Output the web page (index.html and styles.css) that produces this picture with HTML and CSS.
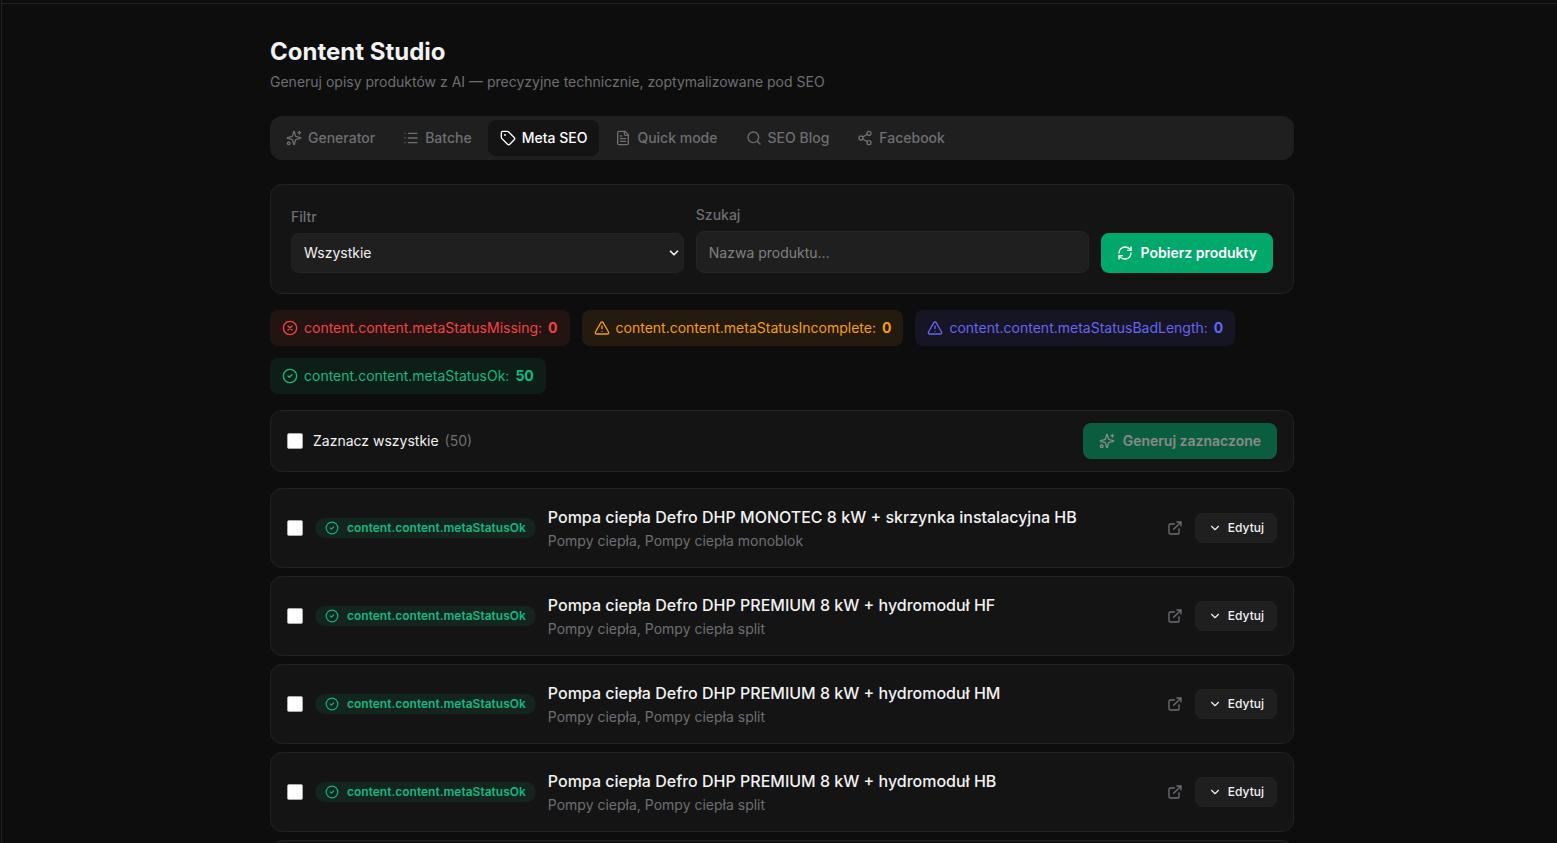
FILE: index.html
```html
<!DOCTYPE html>
<html lang="pl">
<head>
  <meta charset="UTF-8" />
  <meta name="viewport" content="width=device-width, initial-scale=1.0"/>
  <title>Content Studio</title>
  <link rel="stylesheet" href="styles.css">
</head>
<body>

<!-- icon sprite -->
<svg class="sprite" aria-hidden="true">
  <symbol id="i-sparkles" viewBox="0 0 24 24"><path d="M9.937 15.5A2 2 0 0 0 8.5 14.063l-6.135-1.582a.5.5 0 0 1 0-.962L8.5 9.936A2 2 0 0 0 9.937 8.5l1.582-6.135a.5.5 0 0 1 .963 0L14.063 8.5A2 2 0 0 0 15.5 9.937l6.135 1.581a.5.5 0 0 1 0 .964L15.5 14.063a2 2 0 0 0-1.437 1.437l-1.582 6.135a.5.5 0 0 1-.963 0z"/><path d="M20 2v4M22 4h-4"/><circle cx="4" cy="20" r="2"/></symbol>
  <symbol id="i-list" viewBox="0 0 24 24"><path d="M3 5h.01M3 12h.01M3 19h.01M8 5h13M8 12h13M8 19h13"/></symbol>
  <symbol id="i-tag" viewBox="0 0 24 24"><path d="M12.586 2.586A2 2 0 0 0 11.172 2H4a2 2 0 0 0-2 2v7.172a2 2 0 0 0 .586 1.414l8.704 8.704a2.426 2.426 0 0 0 3.42 0l6.58-6.58a2.426 2.426 0 0 0 0-3.42z"/><circle cx="7.5" cy="7.5" r=".5" fill="currentColor"/></symbol>
  <symbol id="i-file" viewBox="0 0 24 24"><path d="M15 2H6a2 2 0 0 0-2 2v16a2 2 0 0 0 2 2h12a2 2 0 0 0 2-2V7Z"/><path d="M14 2v4a2 2 0 0 0 2 2h4M10 9H8M16 13H8M16 17H8"/></symbol>
  <symbol id="i-search" viewBox="0 0 24 24"><circle cx="11" cy="11" r="8"/><path d="m21 21-4.3-4.3"/></symbol>
  <symbol id="i-share" viewBox="0 0 24 24"><circle cx="18" cy="5" r="3"/><circle cx="6" cy="12" r="3"/><circle cx="18" cy="19" r="3"/><path d="m8.59 13.51 6.83 3.98M15.41 6.51l-6.82 3.98"/></symbol>
  <symbol id="i-refresh" viewBox="0 0 24 24"><path d="M3 12a9 9 0 0 1 9-9 9.75 9.75 0 0 1 6.74 2.74L21 8"/><path d="M21 3v5h-5"/><path d="M21 12a9 9 0 0 1-9 9 9.75 9.75 0 0 1-6.74-2.74L3 16"/><path d="M8 16H3v5"/></symbol>
  <symbol id="i-x" viewBox="0 0 24 24"><circle cx="12" cy="12" r="10"/><path d="m15 9-6 6M9 9l6 6"/></symbol>
  <symbol id="i-alert" viewBox="0 0 24 24"><path d="m21.73 18-8-14a2 2 0 0 0-3.48 0l-8 14A2 2 0 0 0 4 21h16a2 2 0 0 0 1.73-3"/><path d="M12 9v4M12 17h.01"/></symbol>
  <symbol id="i-check" viewBox="0 0 24 24"><circle cx="12" cy="12" r="10"/><path d="m9 12 2 2 4-4"/></symbol>
  <symbol id="i-external" viewBox="0 0 24 24"><path d="M15 3h6v6M10 14 21 3M18 13v6a2 2 0 0 1-2 2H5a2 2 0 0 1-2-2V8a2 2 0 0 1 2-2h6"/></symbol>
  <symbol id="i-down" viewBox="0 0 24 24"><path d="m6 9 6 6 6-6"/></symbol>
</svg>

<div class="app">
  <aside class="sidebar"></aside>
  <div class="content">
    <header class="topbar"></header>
    <main class="page">
      <h1>Content Studio</h1>
      <p class="subtitle">Generuj opisy produktów z AI — precyzyjne technicznie, zoptymalizowane pod SEO</p>

      <nav class="tabs">
        <button class="tab"><svg class="icon"><use href="#i-sparkles"/></svg>Generator</button>
        <button class="tab"><svg class="icon"><use href="#i-list"/></svg>Batche</button>
        <button class="tab active"><svg class="icon"><use href="#i-tag"/></svg>Meta SEO</button>
        <button class="tab"><svg class="icon"><use href="#i-file"/></svg>Quick mode</button>
        <button class="tab"><svg class="icon"><use href="#i-search"/></svg>SEO Blog</button>
        <button class="tab"><svg class="icon"><use href="#i-share"/></svg>Facebook</button>
      </nav>

      <form class="card filters">
        <div class="field">
          <label for="filter">Filtr</label>
          <div class="select">
            <select id="filter">
              <option>Wszystkie</option>
            </select>
            <svg class="icon arrow"><use href="#i-down"/></svg>
          </div>
        </div>
        <div class="field">
          <label for="search">Szukaj</label>
          <input type="text" id="search" placeholder="Nazwa produktu...">
        </div>
        <button type="button" class="btn fetch"><svg class="icon"><use href="#i-refresh"/></svg>Pobierz produkty</button>
      </form>

      <div class="stats">
        <div class="stat red"><svg class="icon"><use href="#i-x"/></svg>content.content.metaStatusMissing: <b>0</b></div>
        <div class="stat amber"><svg class="icon"><use href="#i-alert"/></svg>content.content.metaStatusIncomplete: <b>0</b></div>
        <div class="stat indigo"><svg class="icon"><use href="#i-alert"/></svg>content.content.metaStatusBadLength: <b>0</b></div>
        <div class="stat green"><svg class="icon"><use href="#i-check"/></svg>content.content.metaStatusOk: <b>50</b></div>
      </div>

      <div class="card bulk">
        <input type="checkbox" id="all">
        <label for="all">Zaznacz wszystkie <span>(50)</span></label>
        <button class="btn generate" disabled><svg class="icon"><use href="#i-sparkles"/></svg>Generuj zaznaczone</button>
      </div>

      <div class="products">
        <article class="card product">
          <input type="checkbox" aria-labelledby="p1">
          <span class="badge"><svg class="icon"><use href="#i-check"/></svg>content.content.metaStatusOk</span>
          <div class="info">
            <h2 id="p1">Pompa ciepła Defro DHP MONOTEC 8 kW + skrzynka instalacyjna HB</h2>
            <p>Pompy ciepła, Pompy ciepła monoblok</p>
          </div>
          <a href="#" class="open"><svg class="icon"><use href="#i-external"/></svg></a>
          <button class="edit"><svg class="icon"><use href="#i-down"/></svg>Edytuj</button>
        </article>
        <article class="card product">
          <input type="checkbox" aria-labelledby="p2">
          <span class="badge"><svg class="icon"><use href="#i-check"/></svg>content.content.metaStatusOk</span>
          <div class="info">
            <h2 id="p2">Pompa ciepła Defro DHP PREMIUM 8 kW + hydromoduł HF</h2>
            <p>Pompy ciepła, Pompy ciepła split</p>
          </div>
          <a href="#" class="open"><svg class="icon"><use href="#i-external"/></svg></a>
          <button class="edit"><svg class="icon"><use href="#i-down"/></svg>Edytuj</button>
        </article>
        <article class="card product">
          <input type="checkbox" aria-labelledby="p3">
          <span class="badge"><svg class="icon"><use href="#i-check"/></svg>content.content.metaStatusOk</span>
          <div class="info">
            <h2 id="p3">Pompa ciepła Defro DHP PREMIUM 8 kW + hydromoduł HM</h2>
            <p>Pompy ciepła, Pompy ciepła split</p>
          </div>
          <a href="#" class="open"><svg class="icon"><use href="#i-external"/></svg></a>
          <button class="edit"><svg class="icon"><use href="#i-down"/></svg>Edytuj</button>
        </article>
        <article class="card product">
          <input type="checkbox" aria-labelledby="p4">
          <span class="badge"><svg class="icon"><use href="#i-check"/></svg>content.content.metaStatusOk</span>
          <div class="info">
            <h2 id="p4">Pompa ciepła Defro DHP PREMIUM 8 kW + hydromoduł HB</h2>
            <p>Pompy ciepła, Pompy ciepła split</p>
          </div>
          <a href="#" class="open"><svg class="icon"><use href="#i-external"/></svg></a>
          <button class="edit"><svg class="icon"><use href="#i-down"/></svg>Edytuj</button>
        </article>
        <article class="card product"></article>
      </div>
    </main>
  </div>
</div>

</body>
</html>
```
FILE: styles.css
```css
* {
  box-sizing: border-box;
  margin: 0;
}

body {
  background-color: #0d0d0d;
  color: #f2f2f2;
  font-family: Inter, "Liberation Sans", sans-serif;
  font-size: 14px;
  line-height: 20px;
}

button, input, select {
  font: inherit;
  color: inherit;
}

button {
  border: none;
  cursor: pointer;
}

.sprite {
  display: none;
}

.icon {
  width: 16px;
  height: 16px;
  flex-shrink: 0;
  fill: none;
  stroke: currentColor;
  stroke-width: 2;
  stroke-linecap: round;
  stroke-linejoin: round;
}

.app {
  display: flex;
  height: 100vh;
  overflow: hidden;
}

.sidebar {
  width: 2px;
  border-right: 1px solid #222;
}

.content {
  flex: 1;
}

.topbar {
  height: 4px;
  border-bottom: 1px solid #222;
}

.page {
  max-width: 1029px;
  margin: 0 auto;
  padding: 32px 0 0 5px;
}

h1 {
  font-size: 24px;
  line-height: 32px;
  font-weight: 700;
}

.subtitle {
  margin: 4px 0 24px;
  color: #6e6e73;
}

.tabs {
  display: flex;
  gap: 4px;
  padding: 4px;
  margin-bottom: 24px;
  background-color: #1f1f1f;
  border-radius: 12px;
}

.tab {
  display: flex;
  align-items: center;
  gap: 6px;
  padding: 8px 12px;
  background: none;
  border-radius: 8px;
  color: #6e6e73;
  font-weight: 500;
}

.tab.active {
  background-color: #141414;
  color: #fff;
}

.card {
  background-color: #141414;
  border: 1px solid #222;
  border-radius: 12px;
}

.filters {
  display: flex;
  align-items: flex-end;
  gap: 12px;
  padding: 20px;
}

.field {
  flex: 1;
}

.field label {
  display: block;
  margin-bottom: 6px;
  color: #6e6e73;
  font-weight: 500;
}

.select {
  display: grid;
  align-items: center;
}

.select select,
.select .arrow {
  grid-area: 1 / 1;
}

.select .arrow {
  justify-self: end;
  width: 14px;
  height: 14px;
  margin-right: 3px;
  stroke-width: 3;
  pointer-events: none;
}

.field select,
.field input {
  display: block;
  width: 100%;
  height: 40px;
  padding: 0 12px;
  background-color: #1f1f1f;
  border: 1px solid #242424;
  border-radius: 8px;
  appearance: none;
}

.field input {
  height: 42px;
}

.field input::placeholder {
  color: #808080;
}

.btn {
  display: flex;
  align-items: center;
  gap: 8px;
  padding: 8px 16px;
  border-radius: 8px;
  background-color: #00a86b;
  color: #fff;
  font-weight: 600;
}

.fetch {
  height: 40px;
}

.stats {
  display: flex;
  flex-wrap: wrap;
  gap: 12px;
  margin: 16px 0;
}

.stat {
  display: flex;
  align-items: center;
  gap: 6px;
  padding: 8px 12px;
  border-radius: 8px;
}

.red {
  background-color: #241313;
  color: #ef4444;
}

.amber {
  background-color: #241a0d;
  color: #f59e0b;
}

.indigo {
  background-color: #161524;
  color: #6366f1;
}

.green {
  background-color: #0d1e18;
  color: #10b981;
}

.bulk {
  display: flex;
  align-items: center;
  gap: 10px;
  padding: 12px 16px;
  margin-bottom: 16px;
}

.bulk label span {
  margin-left: 2px;
  color: #6e6e73;
}

input[type="checkbox"] {
  appearance: none;
  flex-shrink: 0;
  width: 16px;
  height: 16px;
  background-color: #fff;
  border: 1px solid #aaa;
  border-radius: 2px;
}

.generate {
  margin-left: auto;
  background-color: #0a5e3f;
  color: #8a8a8a;
}

.products {
  display: flex;
  flex-direction: column;
  gap: 8px;
}

.product {
  display: flex;
  align-items: center;
  gap: 12px;
  padding: 16px;
}

.badge {
  display: flex;
  align-items: center;
  gap: 8px;
  padding: 2px 10px;
  border-radius: 10px;
  background-color: #14241e;
  color: #10b981;
  font-size: 12px;
  line-height: 16px;
  font-weight: 600;
}

.badge .icon {
  width: 14px;
  height: 14px;
}

.info {
  flex: 1;
}

.info h2 {
  font-size: 16px;
  line-height: 24px;
  font-weight: 500;
}

.info p {
  margin-top: 2px;
  color: #6e6e73;
}

.open {
  display: flex;
  color: #6e6e73;
}

.edit {
  display: flex;
  align-items: center;
  gap: 6px;
  padding: 6px 12px;
  border: 1px solid #242424;
  border-radius: 8px;
  background-color: #1f1f1f;
  font-size: 12px;
  line-height: 16px;
  font-weight: 500;
}

.edit .icon {
  width: 14px;
  height: 14px;
}
```
